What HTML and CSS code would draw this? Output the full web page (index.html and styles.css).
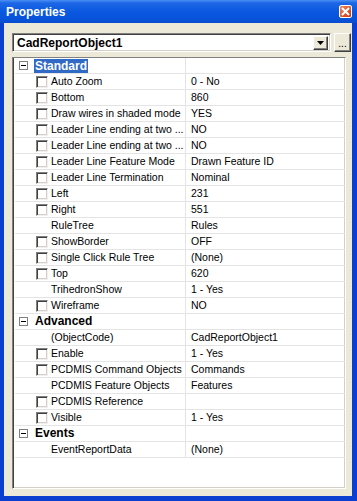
FILE: index.html
```html
<!DOCTYPE html>
<html>
<head>
	<title>Properties</title>
	<link rel="stylesheet" href="styles.css">
</head>
<body>
	<div class="window">
		<div class="titlebar">
			<span class="title">Properties</span>
			<span class="close">
				<svg width="9" height="9" viewBox="0 0 9 9"><path d="M1 1L8 8M8 1L1 8" stroke="#fff" stroke-width="2"/></svg>
			</span>
		</div>
		<div class="client">
			<div class="toolrow">
				<div class="combo">
					<span class="combo-text">CadReportObject1</span>
					<span class="drop"><svg width="7" height="4" viewBox="0 0 7 4"><path d="M0 0H7L3.5 4Z" fill="#000"/></svg></span>
				</div>
				<div class="dots">...</div>
			</div>
			<div class="grid">
				<div class="row cat"><div class="name"><span class="exp"></span><span class="sel">Standard</span></div><div class="val"></div></div>
				<div class="row"><div class="name"><span class="chk"></span>Auto Zoom</div><div class="val">0 - No</div></div>
				<div class="row"><div class="name"><span class="chk"></span>Bottom</div><div class="val">860</div></div>
				<div class="row"><div class="name"><span class="chk"></span>Draw wires in shaded mode</div><div class="val">YES</div></div>
				<div class="row"><div class="name"><span class="chk"></span>Leader Line ending at two ...</div><div class="val">NO</div></div>
				<div class="row"><div class="name"><span class="chk"></span>Leader Line ending at two ...</div><div class="val">NO</div></div>
				<div class="row"><div class="name"><span class="chk"></span>Leader Line Feature Mode</div><div class="val">Drawn Feature ID</div></div>
				<div class="row"><div class="name"><span class="chk"></span>Leader Line Termination</div><div class="val">Nominal</div></div>
				<div class="row"><div class="name"><span class="chk"></span>Left</div><div class="val">231</div></div>
				<div class="row"><div class="name"><span class="chk"></span>Right</div><div class="val">551</div></div>
				<div class="row"><div class="name"><span class="nochk"></span>RuleTree</div><div class="val">Rules</div></div>
				<div class="row"><div class="name"><span class="chk"></span>ShowBorder</div><div class="val">OFF</div></div>
				<div class="row"><div class="name"><span class="chk"></span>Single Click Rule Tree</div><div class="val">(None)</div></div>
				<div class="row"><div class="name"><span class="chk"></span>Top</div><div class="val">620</div></div>
				<div class="row"><div class="name"><span class="nochk"></span>TrihedronShow</div><div class="val">1 - Yes</div></div>
				<div class="row"><div class="name"><span class="chk"></span>Wireframe</div><div class="val">NO</div></div>
				<div class="row cat"><div class="name"><span class="exp"></span><span class="lbl">Advanced</span></div><div class="val"></div></div>
				<div class="row"><div class="name"><span class="nochk"></span>(ObjectCode)</div><div class="val">CadReportObject1</div></div>
				<div class="row"><div class="name"><span class="chk"></span>Enable</div><div class="val">1 - Yes</div></div>
				<div class="row"><div class="name"><span class="chk"></span>PCDMIS Command Objects</div><div class="val">Commands</div></div>
				<div class="row"><div class="name"><span class="nochk"></span>PCDMIS Feature Objects</div><div class="val">Features</div></div>
				<div class="row"><div class="name"><span class="chk"></span>PCDMIS Reference</div><div class="val"></div></div>
				<div class="row"><div class="name"><span class="chk"></span>Visible</div><div class="val">1 - Yes</div></div>
				<div class="row cat"><div class="name"><span class="exp"></span><span class="lbl">Events</span></div><div class="val"></div></div>
				<div class="row"><div class="name"><span class="nochk"></span>EventReportData</div><div class="val">(None)</div></div>
			</div>
		</div>
	</div>
</body>
</html>
```

FILE: styles.css
```css
html, body {
	margin: 0; padding: 0;
	background: #ece9d8;
}
body {
	font-family: "Liberation Sans", Arial, sans-serif;
	font-size: 10.5px; color: #000;
}
.window {
	width: 357px; height: 501px;
	box-sizing: border-box;
	display: flex; flex-direction: column;
	background: #0a3fd0;
	padding: 0 5px 5px 4px;
}
.titlebar {
	height: 23px;
	margin: 0 -5px 0 -4px;
	padding: 0 6px;
	display: flex; align-items: center; justify-content: space-between;
	background: linear-gradient(#4a8ff5 0, #1d67e6 3px, #0a58e0 12px, #0752d8 20px, #0a4ccc 23px);
}
.title {
	color: #fff; font-weight: bold; font-size: 12px;
	padding-top: 1px;
}
.close {
	width: 11px; height: 11px;
	margin-right: -1px;
	border: 1px solid #fff; border-radius: 2px;
	background: linear-gradient(135deg, #ec8b66, #d8552c 60%, #bb3a1a);
	display: flex; align-items: center; justify-content: center;
}
.close svg { display: block; }
.client {
	flex: 1;
	background: #ece9d8;
	padding: 10px 1px 7px 8px;
	display: flex; flex-direction: column;
}
.toolrow {
	display: flex; gap: 3px;
	height: 19px;
}
.combo {
	flex: 1;
	background: #fff;
	border-top: 1px solid #808080; border-left: 1px solid #808080;
	border-right: 1px solid #fff; border-bottom: 1px solid #fff;
	box-shadow: inset 1px 1px 0 #404040, inset -1px -1px 0 #d4d0c8;
	display: flex; align-items: center; justify-content: space-between;
	padding: 0 2px 0 4px;
}
.combo-text {
	font-weight: bold; font-size: 12px;
}
.drop {
	width: 13px; height: 12px;
	background: #ece9d8;
	border-top: 1px solid #fff; border-left: 1px solid #fff;
	border-right: 1px solid #404040; border-bottom: 1px solid #404040;
	box-shadow: inset -1px -1px 0 #808080;
	display: flex; align-items: center; justify-content: center;
}
.drop svg { display: block; }
.dots {
	width: 15px;
	background: #ece9d8;
	border-top: 1px solid #fff; border-left: 1px solid #fff;
	border-right: 1px solid #404040; border-bottom: 1px solid #404040;
	box-shadow: inset -1px -1px 0 #808080;
	text-align: center; line-height: 20px;
	font-size: 10px;
}
.grid {
	margin-top: 5px;
	flex: 1;
	width: 330px;
	background: #fff;
	border-top: 1px solid #808080; border-left: 1px solid #808080;
	border-right: 1px solid #fff; border-bottom: 1px solid #fff;
	box-shadow: inset 1px 0 0 #404040, inset -1px -1px 0 #d4d0c8;
	padding-left: 2px;
}
.row {
	display: flex;
	height: 15px;
	border-bottom: 1px solid #e4e4e4;
	line-height: 15px;
	white-space: nowrap;
}
.name {
	width: 171px;
	border-right: 1px solid #e4e4e4;
	padding-left: 21px;
	box-sizing: border-box;
	display: flex; align-items: center;
	overflow: hidden;
}
.val {
	padding-left: 5px;
}
.chk, .nochk {
	width: 12px; height: 12px;
	box-sizing: border-box;
	margin-right: 3px;
	flex: none;
}
.chk {
	background: #fff;
	border-top: 1px solid #808080; border-left: 1px solid #808080;
	border-right: 1px solid #f0f0f0; border-bottom: 1px solid #f0f0f0;
	box-shadow: inset 1px 1px 0 #404040, inset -1px -1px 0 #d4d0c8;
}
.cat .name {
	padding-left: 4px;
	font-weight: bold; font-size: 12px;
}
.exp {
	width: 9px; height: 9px;
	box-sizing: border-box;
	border: 1px solid #808080;
	margin-right: 6px;
	position: relative;
	flex: none;
}
.exp:after {
	content: '';
	position: absolute;
	left: 1px; top: 3px;
	width: 5px; height: 1px;
	background: #000;
}
.sel {
	background: #316ac5; color: #fff;
	padding: 0 1px;
	line-height: 14px;
}
.lbl {
	padding: 0 1px;
}
```
